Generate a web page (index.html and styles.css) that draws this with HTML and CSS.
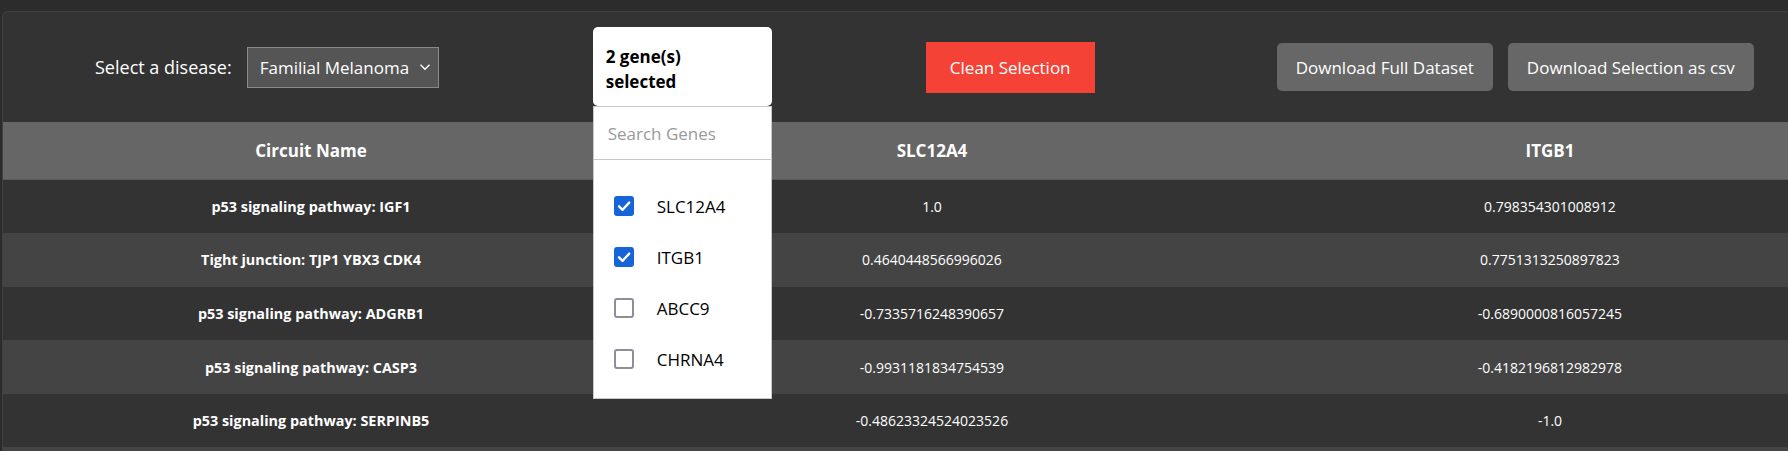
FILE: index.html
```html
<!DOCTYPE html>
<html lang="en">
<head>
<meta charset="utf-8">
<title>Gene circuits</title>
<link rel="stylesheet" href="styles.css">
</head>
<body>
<div class="card">
  <div class="toolbar">
    <div class="disease">
      <span class="disease-label">Select a disease:</span>
      <div class="select">
        <span>Familial Melanoma</span>
        <svg class="chev" width="12" height="8" viewBox="0 0 12 8"><path d="M1.5 1.8 L6 6.2 L10.5 1.8" fill="none" stroke="#fff" stroke-width="1.4"/></svg>
      </div>
    </div>
    <div class="genes">
      <div class="genes-btn">2 gene(s)<br>selected</div>
      <div class="genes-panel">
        <div class="search">Search Genes</div>
        <ul class="gene-list">
          <li><span class="box checked"><svg width="20" height="20" viewBox="0 0 20 20"><path d="M5 10.3 L8.6 13.8 L15.2 6.6" fill="none" stroke="#fff" stroke-width="2.4" stroke-linecap="round" stroke-linejoin="round"/></svg></span>SLC12A4</li>
          <li><span class="box checked"><svg width="20" height="20" viewBox="0 0 20 20"><path d="M5 10.3 L8.6 13.8 L15.2 6.6" fill="none" stroke="#fff" stroke-width="2.4" stroke-linecap="round" stroke-linejoin="round"/></svg></span>ITGB1</li>
          <li><span class="box"></span>ABCC9</li>
          <li><span class="box"></span>CHRNA4</li>
        </ul>
      </div>
    </div>
    <button class="btn-clean">Clean Selection</button>
    <div class="downloads">
      <button class="btn-dl">Download Full Dataset</button>
      <button class="btn-dl">Download Selection as csv</button>
    </div>
  </div>
  <table class="data">
    <colgroup><col class="c1"><col class="c2"><col class="c3"></colgroup>
    <thead>
      <tr><th>Circuit Name</th><th>SLC12A4</th><th>ITGB1</th></tr>
    </thead>
    <tbody>
      <tr><td class="name">p53 signaling pathway: IGF1</td><td>1.0</td><td>0.798354301008912</td></tr>
      <tr><td class="name">Tight junction: TJP1 YBX3 CDK4</td><td>0.4640448566996026</td><td>0.7751313250897823</td></tr>
      <tr><td class="name">p53 signaling pathway: ADGRB1</td><td>-0.7335716248390657</td><td>-0.6890000816057245</td></tr>
      <tr><td class="name">p53 signaling pathway: CASP3</td><td>-0.9931181834754539</td><td>-0.4182196812982978</td></tr>
      <tr><td class="name">p53 signaling pathway: SERPINB5</td><td>-0.48623324524023526</td><td>-1.0</td></tr>
      <tr><td class="name"></td><td></td><td></td></tr>
    </tbody>
  </table>
</div>
</body>
</html>
```

FILE: styles.css
```css
html, body {
  margin: 0;
  padding: 0;
  overflow: hidden;
  background: #2c2c2c;
  font-family: "Open Sans", "Noto Sans", sans-serif;
  color: #fff;
}
.card {
  margin: 11px 0 0 2px;
  background: #333333;
  border-top: 1px solid #404040;
  border-left: 1px solid #404040;
  border-top-left-radius: 6px;
  height: 439px;
  overflow: hidden;
}
.toolbar {
  height: 110px;
  display: flex;
  align-items: center;
  padding-left: 92px;
}
.disease {
  display: flex;
  align-items: center;
}
.disease-label {
  font-size: 18px;
  margin-right: 15px;
}
.select {
  width: 192px;
  height: 41px;
  box-sizing: border-box;
  background: #555555;
  border: 1px solid #8a8a8a;
  display: flex;
  align-items: center;
  justify-content: space-between;
  padding: 0 7px 0 12px;
  font-size: 17px;
}
.chev { display: block; }
.genes {
  position: relative;
  margin-left: 154px;
  margin-top: -2px;
}
.genes-btn {
  width: 179px;
  height: 79px;
  box-sizing: border-box;
  background: #fff;
  border-radius: 5px;
  color: #000;
  font-weight: 700;
  font-size: 17px;
  line-height: 25px;
  padding: 17px 13px 12px;
}
.genes-panel {
  position: absolute;
  top: 100%;
  left: 0;
  width: 179px;
  box-sizing: border-box;
  background: #fff;
  border: 1px solid #c8c8c8;
  border-top: none;
  z-index: 5;
}
.search {
  height: 54px;
  box-sizing: border-box;
  border: 1px solid #c8c8c8;
  margin: 0 -1px;
  padding: 2px 0 0 14px;
  display: flex;
  align-items: center;
  color: #9a9a9a;
  font-size: 17px;
}
.gene-list {
  list-style: none;
  margin: 0;
  padding: 21px 0 13px;
}
.gene-list li {
  height: 51px;
  display: flex;
  align-items: center;
  padding-left: 20px;
  color: #000;
  font-size: 17px;
}
.box {
  width: 20px;
  height: 20px;
  box-sizing: border-box;
  border: 2px solid #8f8d98;
  border-radius: 3px;
  margin-right: 23px;
  display: flex;
  align-items: center;
  justify-content: center;
  flex: none;
}
.box.checked {
  background: #1565d8;
  border-color: #1565d8;
}
.box svg { display: block; flex: none; }
.btn-clean {
  margin-left: 154px;
  height: 51px;
  width: 169px;
  border: none;
  background: #f44336;
  color: #fff;
  font-family: inherit;
  font-size: 17px;
  padding: 0;
}
.downloads {
  margin-left: 182px;
  display: flex;
  gap: 15px;
}
.btn-dl {
  height: 48px;
  border: none;
  border-radius: 5px;
  background: #676767;
  color: #fff;
  font-family: inherit;
  font-size: 17px;
  padding: 0 19px;
}
.data {
  border-collapse: collapse;
  table-layout: fixed;
  width: 1852px;
}
.c1 { width: 616px; }
.c2 { width: 626px; }
.c3 { width: 610px; }
.data th {
  height: 57px;
  box-sizing: border-box;
  background: #666666;
  border-bottom: 1px solid #595959;
  font-size: 17px;
  font-weight: 700;
  padding: 0;
}
.data td {
  height: 53.6px;
  padding: 0;
  text-align: center;
  font-size: 14px;
}
.data td.name {
  font-weight: 700;
  font-size: 14.4px;
}
.data tbody tr:nth-child(odd) { background: #333333; }
.data tbody tr:nth-child(even) { background: #444444; }
```
